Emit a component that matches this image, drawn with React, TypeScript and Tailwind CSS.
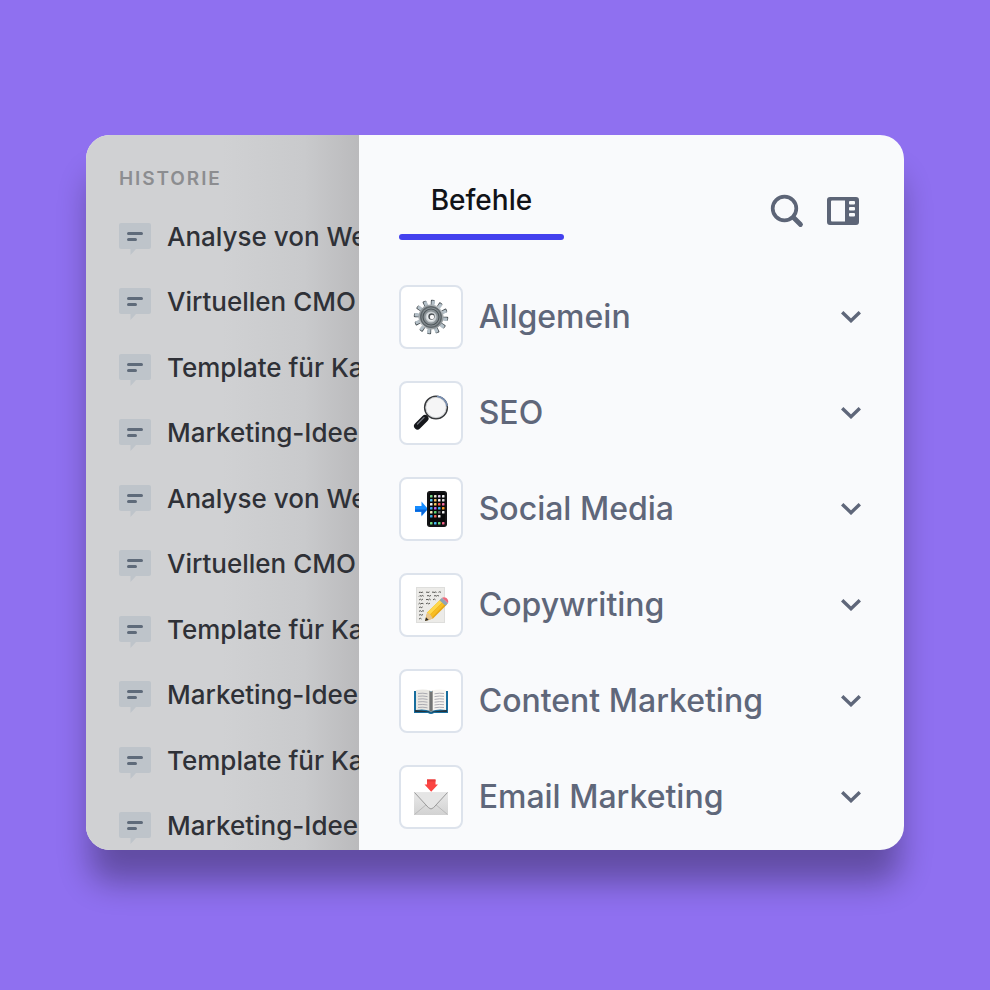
import type { ReactNode } from "react";

const history = [
  "Analyse von We",
  "Virtuellen CMO",
  "Template für Ka",
  "Marketing-Idee",
  "Analyse von We",
  "Virtuellen CMO",
  "Template für Ka",
  "Marketing-Idee",
  "Template für Ka",
  "Marketing-Idee",
];

function ChatIcon() {
  return (
    <svg className="mt-1 h-8 w-8 shrink-0" viewBox="0 0 32 32" aria-hidden="true">
      <path d="M2 0h28q2 0 2 2v22q0 2-2 2H17l-5.500 6v-6H2q-2 0-2-2V2q0-2 2-2Z" fill="#bec4ca" />
      <path d="M9.500 10.500h13M9.500 16.500h7" stroke="#5f6b7a" strokeWidth="3" strokeLinecap="round" />
    </svg>
  );
}

function GearIcon() {
  const teeth = Array.from({ length: 12 }, (_, i) => i * 30 + 8);
  return (
    <svg className="h-9 w-9" viewBox="0 0 36 36" aria-hidden="true">
      <defs>
        <linearGradient id="gear-metal" x1="0" y1="0" x2="1" y2="1">
          <stop offset="0" stopColor="#7d8589" />
          <stop offset="0.5" stopColor="#c4c9cc" />
          <stop offset="1" stopColor="#72797d" />
        </linearGradient>
      </defs>
      {teeth.map((a) => (
        <g key={a} transform={`rotate(${a} 18 18)`}>
          <path d="M16.200 7l-.6-5q-.1-1.200 1-1.200h2q1 0 .9 1.200l-.3 5z" fill="#3d4448" />
          <path d="M16.800 7l-.4-4.600q0-1 .9-1h1.600q1 0 .9 1L19.600 8z" fill="#b4c0c8" />
        </g>
      ))}
      <circle cx="18" cy="18" r="12.500" fill="url(#gear-metal)" />
      <circle cx="18" cy="18" r="11" fill="#5f676b" />
      <circle cx="18" cy="18" r="9.500" fill="#899195" />
      <circle cx="18" cy="18" r="8" fill="none" stroke="#4e565a" strokeWidth="1.200" />
      <circle cx="18" cy="18" r="5.500" fill="#c8ced1" />
      <circle cx="18" cy="18" r="4.200" fill="#e8ecee" />
      <circle cx="18.500" cy="17.500" r="3.200" fill="#4a5054" />
      <circle cx="19" cy="18" r="2.200" fill="#fafafa" />
    </svg>
  );
}

function MagnifierIcon() {
  return (
    <svg className="h-9 w-9" viewBox="0 0 36 36" aria-hidden="true">
      <path d="M13.500 21.500l3-3" stroke="#777" strokeWidth="2.500" />
      <path d="M4.500 31l7.500-7.500" stroke="#15171b" strokeWidth="7" strokeLinecap="round" />
      <path d="M4.500 29l6.500-6.500" stroke="#70747c" strokeWidth="1.300" strokeLinecap="round" />
      <circle cx="23" cy="12.500" r="11.300" fill="#f5f5f6" stroke="#36383b" strokeWidth="1.600" />
      <circle cx="23" cy="12.500" r="10.200" fill="none" stroke="#c7c9cb" strokeWidth="0.800" />
      <path d="M24 1.200a11.300 11.300 0 0 1 10.200 10" fill="none" stroke="#7a91b5" strokeWidth="1.500" />
    </svg>
  );
}

function PhoneIcon() {
  const colors = [
    "#7bd889", "#e9e2d0", "#d9c7ee", "#f1f1f1",
    "#56c6f5", "#f3c266", "#f4f4f4", "#e0e0e0",
    "#f5f5f5", "#f4c95c", "#fb5b50", "#f06da0",
    "#39a9f5", "#bf67ef", "#35b7ee", "#ff9e25",
    "#f2e8bc", "#60d777", "#62666c", "#ededed",
    "#35a5e9", "#ec6558", "#f1f1f1", "#0a0a0a",
  ];
  return (
    <svg className="h-9 w-9" viewBox="0 0 36 36" aria-hidden="true">
      <path d="M2 15h6.500v-4.500l6.500 7.500-6.500 7.500V21H2Z" fill="#168cff" />
      <path d="M2 18.500h12l-5.500 6V20.500H2z" fill="#0964d7" />
      <rect x="14" y="0" width="20" height="36" rx="3" fill="#08090a" />
      <rect x="15" y="1" width="18" height="34" rx="2" fill="none" stroke="#27282b" strokeWidth="0.700" />
      {colors.map((c, i) => (
        <rect key={i} x={17 + (i % 4) * 4} y={4 + Math.floor(i / 4) * 4} width="2.500" height="2.500" rx="0.600" fill={c} />
      ))}
      {["#75df81", "#45b8f5", "#6cda7a", "#f36588"].map((c, i) => (
        <rect key={c} x={17 + i * 4} y="31" width="2.500" height="2.500" rx="0.600" fill={c} />
      ))}
    </svg>
  );
}

function MemoIcon() {
  return (
    <svg className="h-9 w-9" viewBox="0 0 36 36" aria-hidden="true">
      <path d="M3 0h29v36H3z" fill="#dededc" />
      <path d="M4 1h27v34H4z" fill="#ecebe8" />
      <path
        d="M6 6l1-1.200 1 1 1.200-.8 1 .8M13 5.500l1-.6 1 .7 1.500-.7M19 5.500l1-.7 1 .8 1.500-.6 1 .4M25.500 5.300l1-.5 1.500.5M6 9.500l1-1 1.200.8 1-.9 1.500.8M14 9l1-.6 1.500.8 1.500-.8M21 9.200l1-.8 1.200.8 1.300-.7 1.500.5M6 13l1.500-.8 1 .8 1.500-1M13 13l1-.9 1.200.9 1.300-1 1.200.9M20 12.800l1.500-.7 1 .7M5.500 17l1.200-.9 1 .9 1.300-.8 1.500.6M13 16.800l1.500-.7 1 .7 1.500-.6M6 20.700l1.200-.8 1 .8 1.500-.8M6 24.500l1.200-.9 1.300.9 1.500-.9 1 .7M6 28.300l1.200-.8 1.300.7 1.500-.7M6 32l1.500-.7 1 .7"
        fill="none"
        stroke="#4a4946"
        strokeWidth="0.900"
      />
      <path d="M12 34l2.200-8.500L28 12l6 5.500-14 14z" fill="#e8a613" />
      <path d="M14.200 25.500L28 12l2.400 2.200-13.800 13.800z" fill="#ffd84b" />
      <path d="M16.800 28L30.500 14.500l2 2L19 30.500z" fill="#f7bd24" />
      <path d="M12 34l2.200-8.500 3 2 2.800 4z" fill="#e8c58c" />
      <path d="M12 34l1-3.800 2.800 2.800z" fill="#292929" />
      <path d="M26.500 13.300l2.500-2.500 6 5.500-2.500 2.500z" fill="#8fa4b7" />
      <path d="M29 10.800q2-1.300 4.500.3 2.500 2.200 1.500 5.200z" fill="#ed6b7c" />
    </svg>
  );
}

function BookIcon() {
  return (
    <svg className="h-9 w-9" viewBox="0 0 36 36" aria-hidden="true">
      <path d="M1 8h34v22H21q-3 2-6 0H1z" fill="#176d9d" />
      <path d="M2 27l14 1.500 2 1.500 2-1.500 14-1.500v2H21q-3 1.500-6 0H2z" fill="#26343d" />
      <path d="M3 7q9-1.500 14.500.8V28Q11 25.500 3 27z" fill="#e8e7e2" />
      <path d="M33 7q-9-1.500-14.500.8V28Q25 25.500 33 27z" fill="#f6f5f1" />
      <path d="M16 7.500l2 1.500 2-1.500V28l-2 1-2-1z" fill="#9b9b98" />
      <path d="M18 9v19" stroke="#4b4f50" />
      <path
        d="M5 10.500q5-.7 9.500.3M5 13.300q5-.7 9.500.3M5 16.100q5-.7 9.500.3M5 18.900q5-.7 9.500.3M5 21.700q5-.7 9.500.3M5 24.500q5-.7 9.500.3M21.500 10.800q5-1 9.500-.3M21.500 13.600q5-1 9.500-.3M21.500 16.400q5-1 9.500-.3M21.500 19.200q5-1 9.500-.3M21.500 22q5-1 9.500-.3M21.500 24.800q5-1 9.500-.3"
        fill="none"
        stroke="#a4a4ac"
        strokeWidth="0.900"
      />
    </svg>
  );
}

function MailIcon() {
  return (
    <svg className="h-9 w-9" viewBox="0 0 36 36" aria-hidden="true">
      <defs>
        <linearGradient id="mail-paper" x1="0" y1="0" x2="0" y2="1">
          <stop offset="0" stopColor="#e9e9e9" />
          <stop offset="1" stopColor="#d2d2d2" />
        </linearGradient>
      </defs>
      <rect x="1" y="13" width="34" height="23" rx="0.800" fill="url(#mail-paper)" />
      <path d="M1.500 35.500L14 25M34.500 35.500L22 25" stroke="#b6b6b6" strokeWidth="0.900" />
      <path d="M1.500 13.500l14 15.200q2.500 2.600 5 0l14-15.200z" fill="#e5e5e5" />
      <path d="M1.500 13.500l14 15.200q2.500 2.600 5 0l14-15.200" fill="none" stroke="#999" strokeWidth="1" />
      <path d="M14 0.500h8.500v5H25l-6.800 7.300L11.500 5.500H14z" fill="#fb4442" />
      <path d="M14 0.500h8.500v2H14z" fill="#e43b3b" />
    </svg>
  );
}

const commands: { label: string; icon: ReactNode }[] = [
  { label: "Allgemein", icon: <GearIcon /> },
  { label: "SEO", icon: <MagnifierIcon /> },
  { label: "Social Media", icon: <PhoneIcon /> },
  { label: "Copywriting", icon: <MemoIcon /> },
  { label: "Content Marketing", icon: <BookIcon /> },
  { label: "Email Marketing", icon: <MailIcon /> },
];

export default function App() {
  return (
    <main className="min-h-screen bg-[#8f70f0] px-[86px] pt-[135px] pb-[140px] font-['Inter',sans-serif]">
      <div className="grid grid-cols-[1fr_2fr] overflow-hidden rounded-3xl bg-[#f9fafc] shadow-[0_36px_32px_-4px_rgba(0,0,0,0.32)]">
        <aside className="flex min-w-0 flex-col overflow-hidden bg-linear-to-r from-[#d0d1d3] from-50% via-[#c9cacc] via-80% to-[#bababc] pt-8 pl-[33px]">
          <h2 className="text-[19px] leading-6 font-semibold tracking-widest text-[#8c8d90]">HISTORIE</h2>
          <nav aria-label="Historie" className="mt-[13px] -mb-[9px] flex flex-1 flex-col">
            {history.map((title, i) => (
              <a key={i} href="#" className="flex flex-1 items-center gap-4 whitespace-nowrap text-[26px] leading-8 font-medium text-[#2f3137]">
                <ChatIcon />
                {title}
              </a>
            ))}
          </nav>
        </aside>
        <section className="min-w-0 px-10 pt-10 pb-[21px]">
          <header className="flex items-start justify-between">
            <button type="button" className="text-[28px] leading-[50px] font-medium text-[#111318]">
              <span className="block px-8">Befehle</span>
              <span className="mt-[9px] block h-1.5 rounded-sm bg-[#4341ee]" />
            </button>
            <div className="flex items-center gap-5 pt-[18px] pr-[3px] text-[#5d6577]">
              <button type="button" aria-label="Suchen">
                <svg className="h-9 w-9" viewBox="0 0 36 36" fill="none" stroke="currentColor" aria-hidden="true">
                  <circle cx="15.500" cy="15.500" r="11.800" strokeWidth="3.700" />
                  <path d="M24.500 24.500l7 7" strokeWidth="4.800" strokeLinecap="round" />
                </svg>
              </button>
              <button type="button" aria-label="Seitenleiste">
                <svg className="h-9 w-9" viewBox="0 0 36 36" aria-hidden="true">
                  <path
                    fill="currentColor"
                    fillRule="evenodd"
                    d="M5 4h26q3 0 3 3v22q0 3-3 3H5q-3 0-3-3V7q0-3 3-3ZM7 7.500q-1 0-1 1v19q0 1 1 1h13v-21ZM25 8q-1 0-1 1v1.500q0 1 1 1h4q1 0 1-1V9q0-1-1-1ZM25 14q-1 0-1 1v1.500q0 1 1 1h4q1 0 1-1V15q0-1-1-1ZM25 20q-1 0-1 1v1.500q0 1 1 1h4q1 0 1-1V21q0-1-1-1Z"
                  />
                </svg>
              </button>
            </div>
          </header>
          <ul className="mt-[45px] flex flex-col gap-8">
            {commands.map(({ label, icon }) => (
              <li key={label}>
                <button type="button" aria-expanded="false" className="flex w-full items-center gap-4 text-left text-[32px] leading-10 font-medium text-[#5f677a]">
                  <span className="flex size-16 shrink-0 items-center justify-center rounded-lg border-2 border-[#dde3ec] bg-white">
                    {icon}
                  </span>
                  <span className="flex-1">{label}</span>
                  <svg className="mr-[3px] h-3 w-5" viewBox="0 0 20 12" fill="none" stroke="currentColor" strokeWidth="3.400" aria-hidden="true">
                    <path d="M1.200 1.200L10 9.700l8.800-8.500" />
                  </svg>
                </button>
              </li>
            ))}
          </ul>
        </section>
      </div>
    </main>
  );
}
